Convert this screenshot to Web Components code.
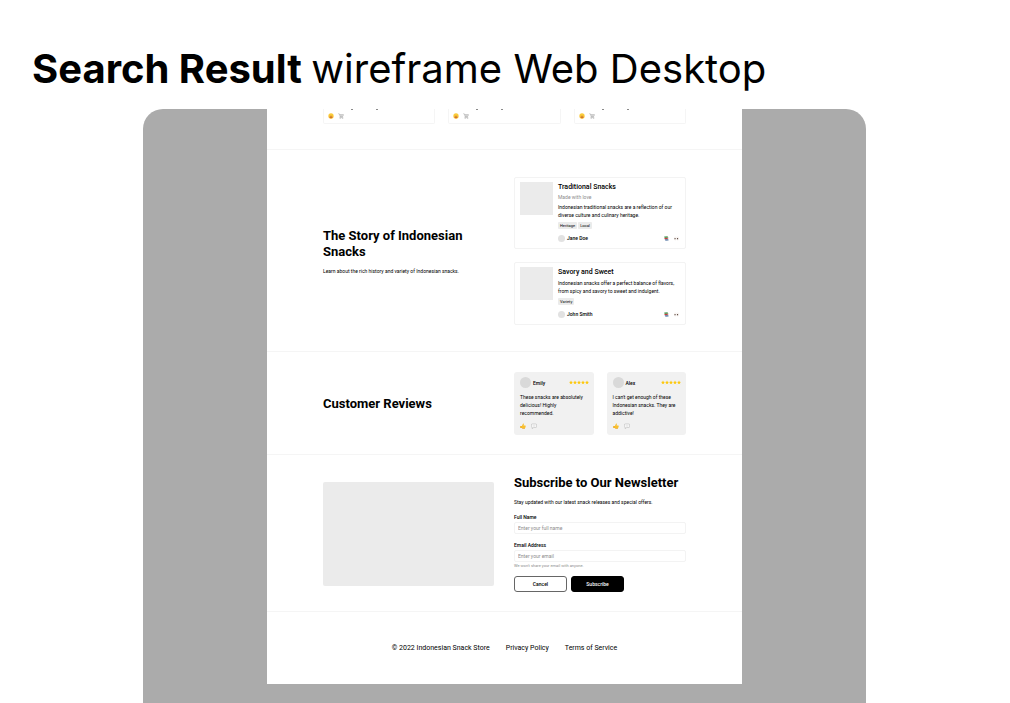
<!DOCTYPE html>
<html lang="en">
<head>
<meta charset="utf-8">
<title>Search Result wireframe Web Desktop</title>
<style>
html{height:100%}
body{margin:0;min-height:100%;background:#fff;color:#000;display:flex;font-family:Roboto,"Liberation Sans",sans-serif}
</style>
</head>
<body>
<wireframe-board></wireframe-board>
<script>
const define = (name, html) => {
  const template = document.createElement('template');
  template.innerHTML = '<style>*{box-sizing:border-box}</style>' + html;
  customElements.define(name, class extends HTMLElement {
    constructor() {
      super();
      this.attachShadow({ mode: 'open' }).append(template.content.cloneNode(true));
    }
  });
};

const glyphs = {
  smile: '<circle cx="6" cy="6" r="5.3" fill="#fbcb3a"/><path d="M1.300 7.500a4.900 4.900 0 0 0 9.400 0z" fill="#ec9a35"/><path d="M3.500 7.200h5a2.500 2.500 0 0 1-5 0z" fill="#c0622a"/><circle cx="4.200" cy="4.600" r=".6" fill="#a8741f"/><circle cx="7.800" cy="4.600" r=".6" fill="#a8741f"/>',
  cart: '<path d="M.5 1.500h2l2 6.500h5.500M3.200 3.200h8L9.800 6.600H4.200M5.400 3.200l.6 3.400M8.200 3.200l-.3 3.400M4.500 8l-1 1.300h7" fill="none" stroke="#999" stroke-width=".9"/><circle cx="4.200" cy="10.700" r=".9" fill="#888"/><circle cx="9.600" cy="10.700" r=".9" fill="#888"/>',
  books: '<path d="M.5 1l8-.5 2 3.500-9 .5z" fill="#4c9a55"/><path d="M1 4.500l9-.5v3l-8.500 1z" fill="#c7403f"/><path d="M2 8l9-1v3.700L3.500 11.600z" fill="#5b7da8"/><path d="M8.800 4.300l2.700.2v2l-2.700.3zM9.300 7.600h2v2.400h-2z" fill="#eee"/>',
  eyes: '<ellipse cx="3" cy="6" rx="2.700" ry="3.600" fill="#fff" stroke="#e3d9d0" stroke-width=".8"/><ellipse cx="9" cy="6" rx="2.700" ry="3.600" fill="#fff" stroke="#e3d9d0" stroke-width=".8"/><circle cx="2.500" cy="6.300" r="1.500" fill="#4a352a"/><circle cx="8.500" cy="6.300" r="1.500" fill="#4a352a"/>',
  thumb: '<path d="M1 6.200l2.800-.4L6.200.8c1.500 0 2 1.200 1.300 2.800l-.5 1.600h3.600c1.100.3 1.100 1.400.5 1.800.4.600.2 1.300-.4 1.500.2.600-.1 1.200-.7 1.300 0 .8-.5 1.200-1.200 1.200H5L3.500 10.200H1z" fill="#f9bf2c"/><path d="M5 11h4c.5 0 1-.4 1-1.200H4zM1 6.200h1.500v4H1z" fill="#e39a1d"/>',
  chat: '<path d="M2.500 2h7q1.700 0 1.700 1.700v3.600q0 1.700-1.700 1.700H5.500L2.200 11.200 2.700 9Q.8 9 .8 7.300V3.700Q.8 2 2.500 2z" fill="#fff" stroke="#999" stroke-width=".8"/><path d="M3 4.600h6M3 6.600h6" stroke="#bbb" stroke-width=".7"/>',
  star: '<path d="M6 .3l1.700 3.800 4.100.4-3.100 2.800.9 4.100L6 9.200l-3.600 2.200.9-4.100L.2 4.500l4.100-.4z" fill="#fdc80d"/>'
};

customElements.define('glyph-icon', class extends HTMLElement {
  connectedCallback() {
    if (this.shadowRoot) return;
    this.attachShadow({ mode: 'open' }).innerHTML = `<style>
:host{display:block;width:6px;height:6px;flex:none}
:host([size="small"]){width:5px;height:5px}
:host([size="star"]){width:4px;height:5px}
svg{display:block;width:100%;height:100%}
</style><svg viewBox="0 0 12 12" aria-hidden="true">${glyphs[this.getAttribute('name')]}</svg>`;
  }
});

define('product-card', `<style>
:host{display:flex;flex-direction:column;flex:1;height:15px;border:1px solid #f5f5f5;border-top:0;border-radius:0 0 2px 2px}
.name{display:flex;gap:23px;padding-left:27px;height:1px}
.name i{width:2px;background:#8a8a8a}
.actions{display:flex;gap:4px;padding:3px 0 0 4px}
</style>
<div class="name"><i></i><i></i></div>
<div class="actions"><glyph-icon name="smile"></glyph-icon><glyph-icon name="cart"></glyph-icon></div>`);

define('page-section', `<style>
:host{display:grid;grid-template-columns:171fr 172fr;column-gap:20px;align-items:center;padding:20px 56px 19px;border-bottom:1px solid #f5f5f5}
:host([tall]){padding:27px 56px 26px}
</style><slot></slot>`);

define('section-title', `<style>
:host{display:block}
h2{margin:0;font-size:13px;line-height:16px;font-weight:700}
::slotted(p){margin:7px 0 0;font-size:5px;line-height:8px}
</style><h2><slot></slot></h2><slot name="note"></slot>`);

define('story-card', `<style>
:host{display:flex;gap:5px;border:1px solid #f3f3f3;border-radius:2px;padding:4px 4px 6px 5px}
.image{flex:none;width:33px;height:33px;background:#ebebeb}
.body{flex:1;min-width:0}
::slotted(h3){margin:0;font-size:7px;line-height:10px;font-weight:500;white-space:nowrap}
::slotted(small){display:block;margin-top:2px;font-size:5px;line-height:7px;color:#8c8c8c}
.text{margin-top:2px;font-size:5px;line-height:8px;white-space:nowrap}
.tags{display:flex;gap:1px;margin-top:3px;font-size:4px;line-height:7px}
::slotted(span[slot=tag]){padding:0 2px;background:#ebebeb;border-radius:1px}
.foot{display:flex;align-items:center;margin-top:5px;height:8px;font-size:5px;font-weight:500}
.avatar{width:7px;height:7px;border-radius:50%;background:#e2e2e2;margin-right:2px}
.icons{display:flex;gap:5px;margin-left:auto;padding-right:2px}
</style>
<div class="image"></div>
<div class="body">
<slot name="title"></slot><slot name="sub"></slot>
<div class="text"><slot></slot></div>
<div class="tags"><slot name="tag"></slot></div>
<div class="foot"><span class="avatar"></span><slot name="author"></slot>
<span class="icons"><glyph-icon name="books" size="small"></glyph-icon><glyph-icon name="eyes" size="small"></glyph-icon></span></div>
</div>`);

define('review-card', `<style>
:host{display:block;flex:1;padding:5px 5px 5px 6px;background:#f1f1f1;border-radius:3px}
.head{display:flex;align-items:center;height:11px;font-size:5px;font-weight:500}
.avatar{width:11px;height:11px;border-radius:50%;background:#d9d9d9;margin-right:2px}
.stars{display:flex;margin-left:auto}
.text{margin:5px 0;font-size:5px;line-height:8px;white-space:nowrap}
.actions{display:flex;gap:5px;height:8px;align-items:center}
</style>
<div class="head"><span class="avatar"></span><slot name="author"></slot>
<span class="stars" role="img" aria-label="5 of 5"><glyph-icon name="star" size="star"></glyph-icon><glyph-icon name="star" size="star"></glyph-icon><glyph-icon name="star" size="star"></glyph-icon><glyph-icon name="star" size="star"></glyph-icon><glyph-icon name="star" size="star"></glyph-icon></span></div>
<div class="text"><slot></slot></div>
<div class="actions"><glyph-icon name="thumb"></glyph-icon><glyph-icon name="chat"></glyph-icon></div>`);

define('newsletter-form', `<style>
:host{display:block}
form{margin:7px 0 0}
label{display:block;font-size:5px;line-height:8px;font-weight:500;margin-bottom:1px}
input{display:block;width:100%;height:12px;border:1px solid #f3f3f3;border-radius:2px;padding:0 3px;font:5px Roboto,"Liberation Sans",sans-serif;background:#fff;outline:0}
input::placeholder{color:#8c8c8c;opacity:1}
input+label{margin-top:7px}
small{display:block;margin-top:1px;font-size:4px;line-height:5px;color:#8c8c8c}
.buttons{display:flex;gap:4px;margin-top:8px}
button{width:53px;height:16px;padding:0;border:1px solid #000;border-radius:3px;font:500 5px Roboto,"Liberation Sans",sans-serif;background:#fff;color:#000}
button[type=reset]{border-color:#666}
button[type=submit]{background:#000;color:#fff}
</style>
<section-title>Subscribe to Our Newsletter<p slot="note">Stay updated with our latest snack releases and special offers.</p></section-title>
<form>
<label for="name">Full Name</label><input id="name" type="text" placeholder="Enter your full name">
<label for="email">Email Address</label><input id="email" type="email" placeholder="Enter your email">
<small>We won't share your email with anyone.</small>
<div class="buttons"><button type="reset">Cancel</button><button type="submit">Subscribe</button></div>
</form>`);

define('page-footer', `<style>
:host{display:flex;justify-content:center;gap:16px;padding:32px 0;font-size:7px;line-height:8px;white-space:nowrap}
a{color:inherit;text-decoration:none}
</style><span>© 2022 Indonesian Snack Store</span><a href="#privacy">Privacy Policy</a><a href="#terms">Terms of Service</a>`);

define('snack-page', `<style>
:host{display:block;background:#fff}
.products{display:flex;gap:13px;padding:0 56px 25px;border-bottom:1px solid #f5f5f5}
.stories{display:grid;gap:13px}
.reviews{display:flex;gap:13px}
.picture{height:104px;background:#ebebeb;border-radius:2px}
</style>
<div class="products"><product-card></product-card><product-card></product-card><product-card></product-card></div>
<page-section tall>
<section-title>The Story of Indonesian Snacks<p slot="note">Learn about the rich history and variety of Indonesian snacks.</p></section-title>
<div class="stories">
<story-card><h3 slot="title">Traditional Snacks</h3><small slot="sub">Made with love</small>Indonesian traditional snacks are a reflection of our<br>diverse culture and culinary heritage.<span slot="tag">Heritage</span><span slot="tag">Local</span><span slot="author">Jane Doe</span></story-card>
<story-card><h3 slot="title">Savory and Sweet</h3>Indonesian snacks offer a perfect balance of flavors,<br>from spicy and savory to sweet and indulgent.<span slot="tag">Variety</span><span slot="author">John Smith</span></story-card>
</div>
</page-section>
<page-section>
<section-title>Customer Reviews</section-title>
<div class="reviews">
<review-card><span slot="author">Emily</span>These snacks are absolutely<br>delicious! Highly<br>recommended.</review-card>
<review-card><span slot="author">Alex</span>I can't get enough of these<br>Indonesian snacks. They are<br>addictive!</review-card>
</div>
</page-section>
<page-section>
<div class="picture"></div>
<newsletter-form></newsletter-form>
</page-section>
<page-footer></page-footer>`);

define('wireframe-board', `<style>
:host{display:flex;flex-direction:column;flex:1;min-width:0}
h1{margin:0;padding:45px 32px 16px;font:400 40px/48px Inter,sans-serif}
b{font-weight:700}
.panel{flex:1;margin:0 144px 0 143px;padding:0 124px 19px;background:#ababab;border-radius:20px 20px 0 0}
</style>
<h1><b>Search Result </b>wireframe Web Desktop</h1>
<div class="panel"><snack-page></snack-page></div>`);
</script>
</body>
</html>
